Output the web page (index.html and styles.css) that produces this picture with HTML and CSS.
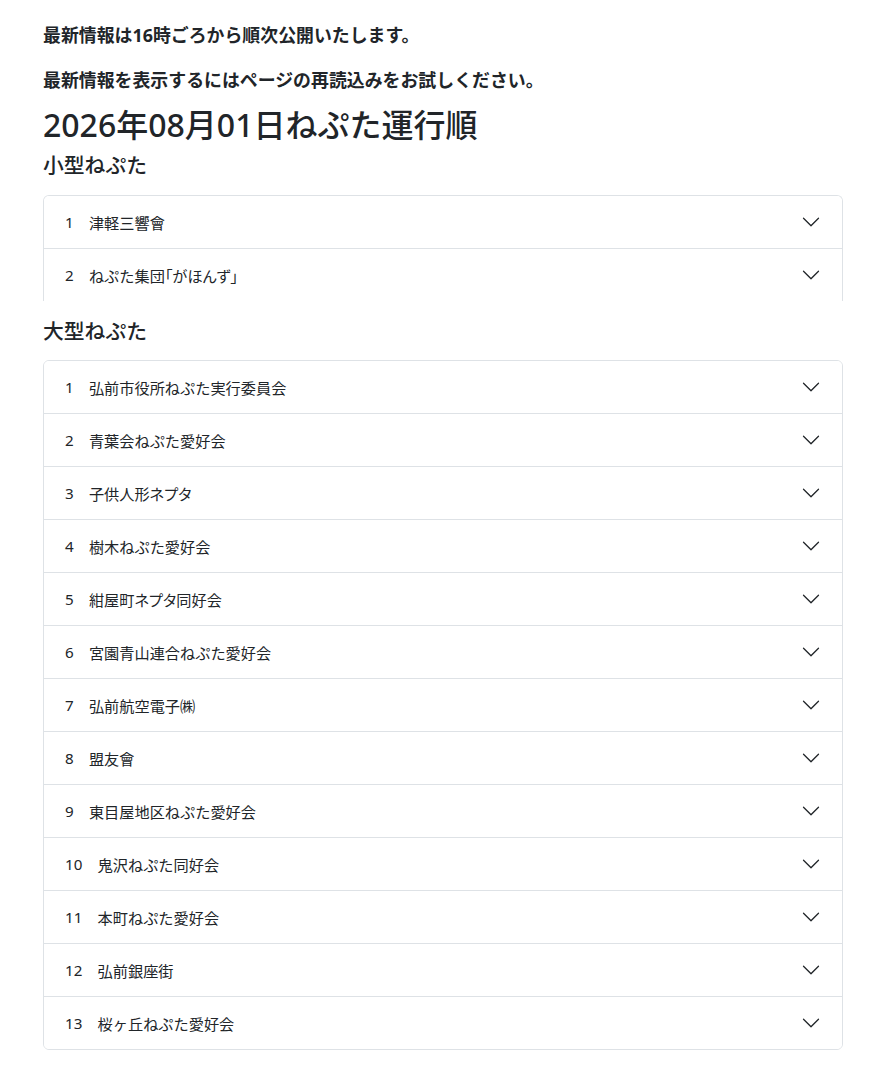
FILE: index.html
```html
<!DOCTYPE html>
<html lang="ja">
<head>
    <meta charset="UTF-8">
    <meta name="viewport" content="width=device-width, initial-scale=1.0">
    <title>ねぷた運行順</title>
    <link rel="stylesheet" href="styles.css">
</head>
<body>
    <div class="container">
        <p class="notice">最新情報は16時ごろから順次公開いたします。</p>
        <p class="notice notice-last">最新情報を表示するにはページの再読込みをお試しください。</p>
        <h1>2026年08月01日ねぷた運行順</h1>

        <h2 class="first">小型ねぷた</h2>
        <div class="accordion cut">
            <div class="item"><button class="item-button" type="button"><span class="no">1</span>　津軽三響會</button></div>
            <div class="item"><button class="item-button" type="button"><span class="no">2</span>　ねぷた集団<span class="palt">「がほんず」</span></button></div>
        </div>

        <h2>大型ねぷた</h2>
        <div class="accordion">
            <div class="item"><button class="item-button" type="button"><span class="no">1</span>　弘前市役所ねぷた実行委員会</button></div>
            <div class="item"><button class="item-button" type="button"><span class="no">2</span>　青葉会ねぷた愛好会</button></div>
            <div class="item"><button class="item-button" type="button"><span class="no">3</span>　子供人形<span class="palt">ネプタ</span></button></div>
            <div class="item"><button class="item-button" type="button"><span class="no">4</span>　樹木ねぷた愛好会</button></div>
            <div class="item"><button class="item-button" type="button"><span class="no">5</span>　紺屋町<span class="palt">ネプタ</span>同好会</button></div>
            <div class="item"><button class="item-button" type="button"><span class="no">6</span>　宮園青山連合ねぷた愛好会</button></div>
            <div class="item"><button class="item-button" type="button"><span class="no">7</span>　弘前航空電子㈱</button></div>
            <div class="item"><button class="item-button" type="button"><span class="no">8</span>　盟友會</button></div>
            <div class="item"><button class="item-button" type="button"><span class="no">9</span>　東目屋地区ねぷた愛好会</button></div>
            <div class="item"><button class="item-button" type="button"><span class="no">10</span>　鬼沢ねぷた同好会</button></div>
            <div class="item"><button class="item-button" type="button"><span class="no">11</span>　本町ねぷた愛好会</button></div>
            <div class="item"><button class="item-button" type="button"><span class="no">12</span>　弘前銀座街</button></div>
            <div class="item"><button class="item-button" type="button"><span class="no">13</span>　桜ヶ丘ねぷた愛好会</button></div>
        </div>
    </div>

    <script>
        // add the chevron to every accordion button
        document.querySelectorAll(".item-button").forEach(function(btn) {
            const chevron = '<svg class="chevron" width="20" height="20" viewBox="0 0 16 16"><path fill="#212529" fill-rule="evenodd" d="M1.646 4.646a.5.5 0 0 1 .708 0L8 10.293l5.646-5.647a.5.5 0 0 1 .708.708l-6 6a.5.5 0 0 1-.708 0l-6-6a.5.5 0 0 1 0-.708z"/></svg>';
            btn.insertAdjacentHTML("beforeend", chevron);
        });
    </script>
</body>
</html>
```

FILE: styles.css
```css
body {
    margin: 0;
    padding: 0;
    font-family: "Noto Sans", "Noto Sans CJK JP", sans-serif;
    color: #212529;
    background-color: #fff;
}

.container {
    width: 800px;
    padding: 21px 35px 0 43px;
}

.notice {
    margin: 0 0 17px;
    font-size: 17.9px;
    font-weight: bold;
    line-height: 28px;
}

.notice-last {
    margin-bottom: 12px;
}

h1 {
    margin: 0;
    font-size: 32px;
    font-weight: 500;
    line-height: 38px;
}

h2 {
    margin: 18px 0 16px;
    font-size: 20.8px;
    font-weight: 500;
    line-height: 25px;
}

h2.first {
    margin-top: 9px;
    margin-bottom: 17px;
}

.accordion {
    border: 1px solid #dee2e6;
    border-radius: 6px;
    overflow: hidden;
}

.accordion.cut {
    border-bottom: none;
    border-radius: 6px 6px 0 0;
}

.item + .item {
    border-top: 1px solid #dee2e6;
}

.item-button {
    display: flex;
    align-items: center;
    width: 100%;
    height: 52px;
    padding: 0 21px;
    border: none;
    background: #fff;
    font-family: inherit;
    font-size: 15.2px;
    color: #212529;
    text-align: left;
    cursor: pointer;
}

.palt {
    font-feature-settings: "palt";
}

.chevron {
    margin-left: auto;
    flex-shrink: 0;
}
```
